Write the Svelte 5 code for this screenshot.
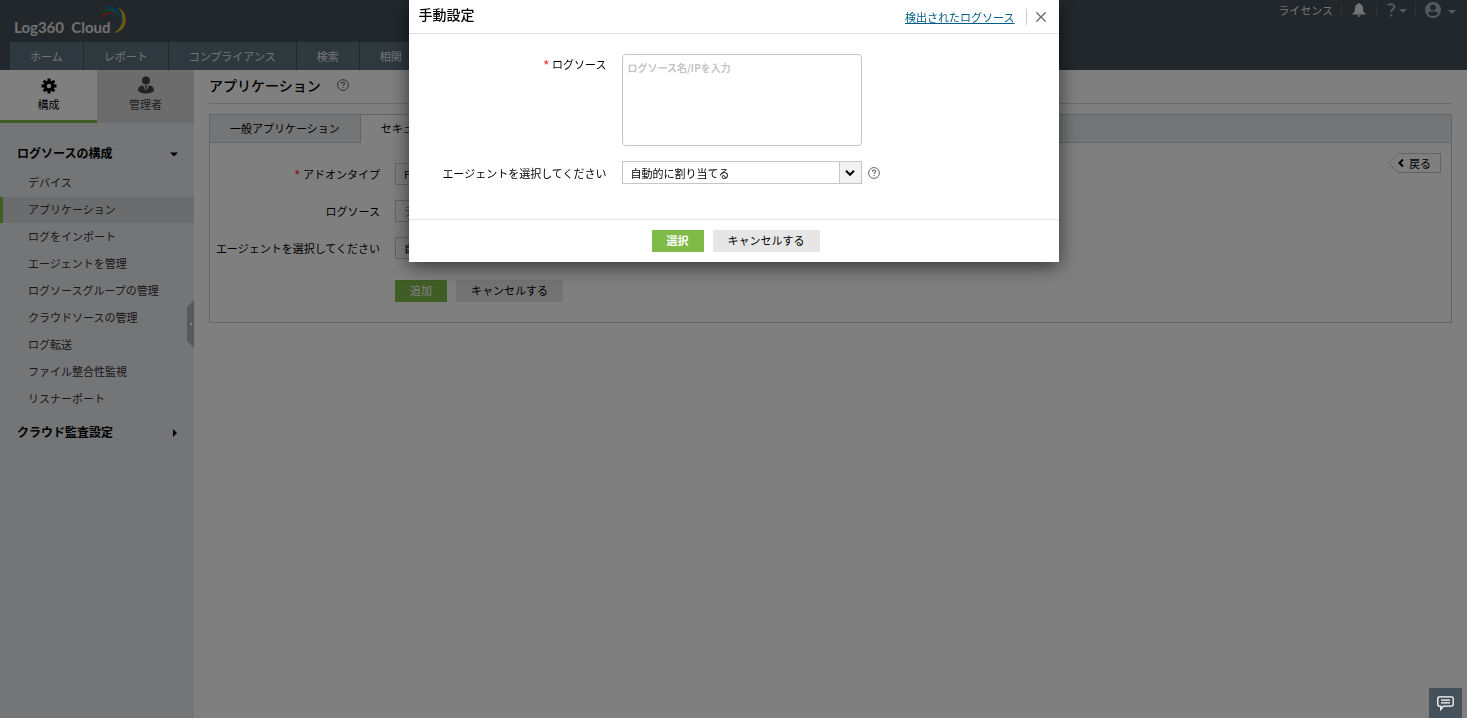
<script lang="ts">
    const navItems = ["ホーム", "レポート", "コンプライアンス", "検索", "相関"];
    const sources = [
        "デバイス",
        "アプリケーション",
        "ログをインポート",
        "エージェントを管理",
        "ログソースグループの管理",
        "クラウドソースの管理",
        "ログ転送",
        "ファイル整合性監視",
        "リスナーポート",
    ];

    let current = $state("アプリケーション");
    let modalOpen = $state(true);
    let logSource = $state("");

    function closeModal() {
        modalOpen = false;
    }
</script>

{#snippet helpIcon()}
    <svg class="help" viewBox="0 0 12 12" width="12" height="12" fill="none" stroke="currentColor">
        <circle cx="6" cy="6" r="5.4" />
        <path d="M4.4 4.7c0-2.1 3.2-2.1 3.2-.2 0 1.2-1.6 1.2-1.6 2.6M6 8.1v1.1" stroke-width="1.1" />
    </svg>
{/snippet}

<div class="page">
    <header>
        <div class="top">
            <a class="logo" href="#home">
                Log360&nbsp; Cloud
                <svg viewBox="0 0 30 30" width="30" height="30">
                    <path d="M1.500 16C2.500 8 12 4.500 18 10C11.500 7.500 5 9.500 1.500 16Z" fill="#b8303f" />
                    <path d="M2.500 10.500C6 2.500 17 1.500 20 12C15 4.500 8 4 2.500 10.500Z" fill="#1d8a45" />
                    <path d="M6.500 3C15-1.500 25 5 23.500 18C22 8 15.500 3.500 6.500 3Z" fill="#1270ad" />
                    <path d="M19.500 2C31 7 31.500 26 15 28C26.500 23 27 9 19.500 2Z" fill="#d9b420" />
                </svg>
            </a>
            <div class="tools">
                <a href="#license">ライセンス</a>
                <button type="button" class="tool bell" aria-label="通知">
                    <svg viewBox="0 0 14 14" width="14" height="14" fill="currentColor">
                        <path d="M7 0c.7 0 1 .5 1 1 2 .5 3 2.200 3 4.200 0 3 .8 4.500 2.500 5.400V11.500H.5v-.9C2.200 9.700 3 8.200 3 5.200 3 3.200 4 1.500 6 1c0-.5.300-1 1-1zM5.500 12.300h3c0 2-3 2-3 0z" />
                    </svg>
                </button>
                <button type="button" class="tool question" aria-label="ヘルプ">
                    <svg viewBox="0 0 20 14" width="20" height="14">
                        <path d="M1 2.300C3.500.6 7.300 1 7.300 4c0 2.300-3.100 2.500-3.100 5.300M4.200 11.200v2.200" fill="none" stroke="currentColor" stroke-width="2" />
                        <path d="M12 6h8l-4 4z" fill="currentColor" />
                    </svg>
                </button>
                <button type="button" class="tool user" aria-label="アカウント">
                    <svg viewBox="0 0 31 16" width="31" height="16">
                        <path d="M8 0a8 8 0 1 0 0 16A8 8 0 0 0 8 0zm0 2.400a2.900 2.900 0 1 1 0 5.800 2.900 2.900 0 0 1 0-5.800zM3 11.400c1-3 9-3 10 0-2 3.400-8 3.400-10 0z" fill="currentColor" fill-rule="evenodd" />
                        <path d="M23 8h8l-4 4z" fill="currentColor" />
                    </svg>
                </button>
            </div>
        </div>
        <nav>
            {#each navItems as item}
                <a href="#nav">{item}</a>
            {/each}
        </nav>
    </header>

    <div class="content">
        <aside>
            <div class="side-tabs">
                <button type="button" class="side-tab active">
                    <svg viewBox="0 0 16 16" width="16" height="16">
                        <g fill="none" stroke="currentColor">
                            <circle cx="8" cy="8" r="3.900" stroke-width="3.200" />
                            <path d="M8 .5v3M8 12.500v3M.5 8h3M12.500 8h3M2.700 2.700l2.100 2.100M11.200 11.200l2.100 2.100M2.700 13.300l2.100-2.100M11.200 4.800l2.100-2.100" stroke-width="3" />
                        </g>
                    </svg>
                    構成
                </button>
                <button type="button" class="side-tab">
                    <svg viewBox="0 0 16 18" width="16" height="18" fill="currentColor">
                        <circle cx="8" cy="4.500" r="4" />
                        <path d="M0 14.500C0 11 3 9.500 5 9.300L7.500 15 7.300 11l-.8-1.500h3L8.700 11l-.2 4L11 9.300c2 .2 5 1.700 5 5.200-2 4-14 4-16 0z" />
                    </svg>
                    管理者
                </button>
            </div>
            <button type="button" class="section">
                ログソースの構成
                <svg viewBox="0 0 8 10" width="8" height="10"><path d="M0 4.500h8L4 8.500z" fill="currentColor" /></svg>
            </button>
            <ul>
                {#each sources as item}
                    <li class:active={item === current}>
                        <a href="#source" onclick={() => (current = item)}>{item}</a>
                    </li>
                {/each}
            </ul>
            <button type="button" class="section">
                クラウド監査設定
                <svg viewBox="0 0 8 10" width="8" height="10"><path d="M3 2l4 4-4 4z" fill="currentColor" /></svg>
            </button>
            <button type="button" class="handle" aria-label="サイドバーを閉じる">
                <svg viewBox="0 0 7 48" width="7" height="48">
                    <path d="M7 0v48l-7-7V7z" fill="#aeb5b8" />
                    <path d="M5 22v4l-2.500-2z" fill="#fff" />
                </svg>
            </button>
        </aside>

        <main>
            <div class="title">
                <h1>アプリケーション</h1>
                {@render helpIcon()}
            </div>
            <div class="panel">
                <div class="tabs">
                    <button type="button">一般アプリケーション</button>
                    <button type="button" class="active">セキュリティアプリケーション</button>
                </div>
                <div class="panel-body">
                    <form>
                        <div class="row">
                            <label for="addon"><span class="required">*</span> アドオンタイプ</label>
                            <select id="addon"><option>Fortinet</option></select>
                        </div>
                        <div class="row">
                            <label for="device">ログソース</label>
                            <input id="device" type="text" placeholder="デバイスを選択" />
                        </div>
                        <div class="row">
                            <label for="agent">エージェントを選択してください</label>
                            <select id="agent"><option>自動的に割り当てる</option></select>
                        </div>
                        <div class="actions">
                            <button type="button" class="btn primary">追加</button>
                            <button type="button" class="btn">キャンセルする</button>
                        </div>
                    </form>
                    <button type="button" class="back">
                        <svg viewBox="0 0 10 20" width="10" height="20">
                            <path d="M10 .5L.7 10l9.300 9.500" fill="#fff" stroke="#c4c7ca" />
                        </svg>
                        <span>
                            <svg viewBox="0 0 6 8" width="6" height="8" fill="none" stroke="currentColor" stroke-width="2">
                                <path d="M5 .5L1.500 4 5 7.500" />
                            </svg>
                            戻る
                        </span>
                    </button>
                </div>
            </div>
        </main>
    </div>
</div>

{#if modalOpen}
    <div class="overlay">
        <div class="modal" role="dialog" aria-labelledby="modal-title">
            <div class="modal-header">
                <h2 id="modal-title">手動設定</h2>
                <a href="#detected">検出されたログソース</a>
                <button type="button" class="close" aria-label="閉じる" onclick={closeModal}>
                    <svg viewBox="0 0 10 10" width="10" height="10" stroke="currentColor" stroke-width="1.300">
                        <path d="M.4.4l9.200 9.200M9.600.4L.4 9.600" />
                    </svg>
                </button>
            </div>
            <div class="modal-body">
                <div class="field">
                    <label for="log-source"><span class="required">*</span> ログソース</label>
                    <textarea id="log-source" placeholder="ログソース名/IPを入力" bind:value={logSource}></textarea>
                </div>
                <div class="field">
                    <label for="modal-agent">エージェントを選択してください</label>
                    <div class="select">
                        <select id="modal-agent"><option>自動的に割り当てる</option></select>
                        <span class="arrow">
                            <svg viewBox="0 0 10 6" width="10" height="6" fill="none" stroke="#000" stroke-width="2">
                                <path d="M1 .8l4 4 4-4" />
                            </svg>
                        </span>
                    </div>
                    {@render helpIcon()}
                </div>
            </div>
            <div class="modal-footer">
                <button type="button" class="btn primary strong">選択</button>
                <button type="button" class="btn" onclick={closeModal}>キャンセルする</button>
            </div>
        </div>
    </div>
{/if}

<button type="button" class="chat" aria-label="チャット">
    <svg viewBox="0 0 17 15" width="17" height="15" fill="none" stroke="#fff" stroke-width="1.300">
        <path d="M2.500.8h12q1.700 0 1.700 1.700v6q0 1.700-1.700 1.700H6.500L3.800 13.500v-3.300H2.500Q.8 10.200.8 8.500v-6Q.8.8 2.500.8zM4 4.200h9M4 6.900h9" />
    </svg>
</button>

<style>
    :global(body) {
        margin: 0;
        background: #fff;
        color: #000;
        font: 11px/20px "Noto Sans CJK JP", sans-serif;
    }

    button,
    input,
    select,
    textarea {
        box-sizing: border-box;
        margin: 0;
        padding: 0;
        border: 0;
        border-radius: 0;
        background: none;
        color: inherit;
        font: inherit;
    }

    button {
        cursor: pointer;
    }

    a {
        color: inherit;
        text-decoration: none;
    }

    svg {
        display: block;
        flex: none;
    }

    h1,
    h2 {
        margin: 0;
        font-size: 14px;
        font-weight: 500;
    }

    .page {
        display: flex;
        flex-direction: column;
        min-height: 100vh;
    }

    header {
        background: #444f56;
        color: #e4e7e8;
    }

    .top {
        display: flex;
        justify-content: space-between;
        height: 42px;
    }

    .logo {
        position: relative;
        padding: 17px 0 0 14px;
        color: #e0e0e0;
        font: bold 15px/20px Lato, sans-serif;
    }

    .logo svg {
        position: absolute;
        top: 5px;
        right: -17px;
    }

    .tools {
        display: flex;
        align-items: center;
        height: 19px;
        padding-right: 11px;
    }

    .tool {
        padding: 0 10px;
        border-left: 1px solid #59646a;
        line-height: 14px;
    }

    .tools a {
        padding-right: 8px;
    }

    .question,
    .user {
        color: #a7b3b9;
    }

    .question {
        padding: 0 8px 0 10px;
    }

    .user {
        padding: 0 0 0 9px;
    }

    nav {
        display: flex;
        gap: 1px;
        padding-left: 10px;
    }

    nav a {
        padding: 4px 20px;
        background: #5c727e;
    }

    .content {
        display: flex;
        flex: 1;
    }

    aside {
        position: relative;
        flex: none;
        width: 194px;
        background: #e7eaee;
    }

    .side-tabs {
        display: flex;
        margin-bottom: 20px;
    }

    .side-tab {
        display: flex;
        flex: 1;
        flex-direction: column;
        align-items: center;
        justify-content: flex-end;
        height: 53px;
        padding-bottom: 6px;
        border-bottom: 3px solid #d8d8d8;
        background: #d8d8d8;
        color: #444;
    }

    .side-tab.active {
        border-color: #7fbb49;
        background: #fff;
        color: #000;
    }

    .section {
        display: flex;
        align-items: center;
        justify-content: space-between;
        width: 100%;
        padding: 0 16px 0 17px;
        font-size: 12px;
        font-weight: bold;
    }

    ul {
        margin: 7px 0 10px;
        padding: 0;
        list-style: none;
    }

    li {
        margin-bottom: 1px;
        border-left: 3px solid transparent;
        color: #333;
    }

    li.active {
        border-color: #7fbb49;
        background: #d4d8db;
    }

    li a {
        display: block;
        padding: 2px 0 4px 25px;
    }

    .handle {
        position: absolute;
        top: 230px;
        right: 0;
    }

    main {
        flex: 1;
        padding: 5px 15px;
    }

    .title {
        display: flex;
        align-items: center;
        gap: 16px;
        padding-bottom: 8px;
        border-bottom: 1px solid #d5d7d9;
    }

    .help {
        color: #666;
    }

    .panel {
        margin-top: 10px;
        border: 1px solid #c4c8cc;
    }

    .tabs {
        display: flex;
        background: #e7eaee;
        box-shadow: inset 0 -1px #c4c8cc;
    }

    .tabs button {
        height: 28px;
        padding: 0 20px 2px;
        border-right: 1px solid #c4c8cc;
    }

    .tabs .active {
        background: #fff;
    }

    .panel-body {
        display: flex;
        align-items: flex-start;
        justify-content: space-between;
        padding: 10px;
    }

    form {
        padding: 10px 0;
    }

    .row {
        display: flex;
        align-items: center;
        gap: 15px;
        margin: 0 0 15px -10px;
    }

    .row label {
        width: 170px;
        text-align: right;
    }

    .row input,
    .row select {
        width: 240px;
        height: 22px;
        padding: 0 8px;
        border: 1px solid #c4c8cc;
        appearance: none;
    }

    .required {
        color: #f33;
        font-size: 14px;
        line-height: 11px;
        vertical-align: -2px;
    }

    .actions {
        display: flex;
        gap: 9px;
        padding: 6px 0 0 175px;
    }

    .btn {
        height: 22px;
        padding: 0 15px 2px;
        background: #e6e6e6;
    }

    .btn.primary {
        background: #7fbb49;
        color: #fff;
    }

    .btn.strong {
        font-weight: bold;
    }

    .back {
        display: flex;
    }

    .back span {
        display: flex;
        align-items: center;
        gap: 5px;
        height: 18px;
        padding-right: 9px;
        border: solid #c4c7ca;
        border-width: 1px 1px 1px 0;
    }

    .overlay {
        position: fixed;
        inset: 0;
        display: flex;
        align-items: flex-start;
        justify-content: center;
        background: rgba(0, 0, 0, 0.5);
    }

    .modal {
        width: 650px;
        background: #fff;
        box-shadow: 0 4px 18px rgba(0, 0, 0, 0.6);
    }

    .modal-header {
        display: flex;
        align-items: center;
        height: 33px;
        padding: 0 13px 0 10px;
        border-bottom: 1px solid #e2e2e2;
    }

    .modal-header h2 {
        flex: 1;
        padding-bottom: 6px;
    }

    .modal-header a {
        margin-right: 11px;
        color: #005c8a;
        text-decoration: underline;
    }

    .close {
        padding: 3px 0 3px 9px;
        border-left: 1px solid #ccc;
        color: #666;
    }

    .modal-body {
        padding: 20px 0 35px;
    }

    .field {
        display: flex;
        align-items: center;
        margin-bottom: 15px;
    }

    .field:last-child {
        margin-bottom: 0;
    }

    .field label {
        width: 198px;
        margin-right: 15px;
        text-align: right;
    }

    .field:first-child label {
        align-self: flex-start;
    }

    textarea {
        width: 240px;
        height: 92px;
        padding: 3px 5px;
        border: 1px solid #c6c6c6;
        border-radius: 4px;
        resize: none;
    }

    textarea::placeholder {
        color: #c4c4c4;
        font-size: 10px;
        font-weight: bold;
    }

    .select {
        display: flex;
        box-sizing: border-box;
        position: relative;
        width: 240px;
        height: 23px;
        margin-right: 6px;
        border: 1px solid #c6c6c6;
    }

    .select select {
        flex: 1;
        padding: 0 8px;
        appearance: none;
    }

    .arrow {
        position: absolute;
        top: 0;
        right: 0;
        bottom: 0;
        display: flex;
        align-items: center;
        justify-content: center;
        width: 21px;
        border-left: 1px solid #c6c6c6;
        background: #f2f2f2;
        pointer-events: none;
    }

    .modal-footer {
        display: flex;
        justify-content: center;
        gap: 9px;
        padding: 10px 0 10px 4px;
        border-top: 1px solid #e2e2e2;
    }

    .chat {
        position: fixed;
        right: 5px;
        bottom: 0;
        display: flex;
        align-items: center;
        justify-content: center;
        width: 33px;
        height: 30px;
        background: #44515a;
    }
</style>
